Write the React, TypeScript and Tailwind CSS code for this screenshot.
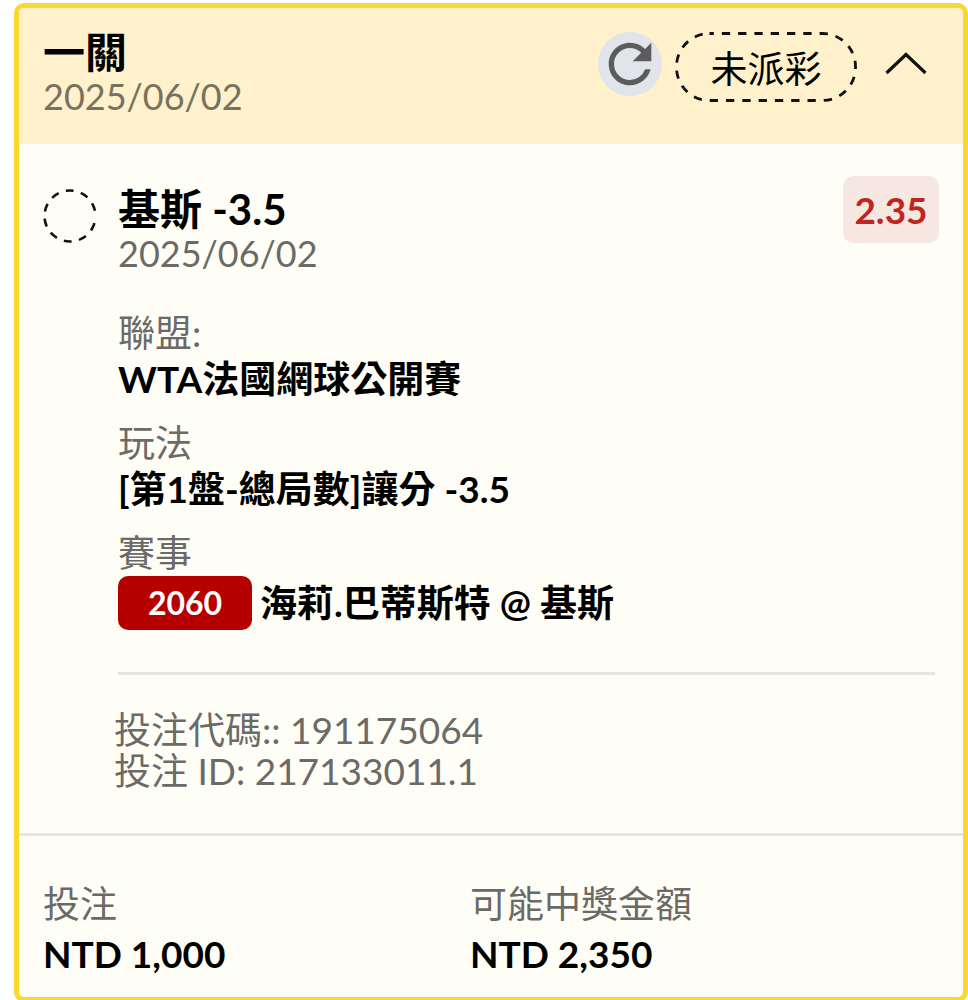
import { useState } from "react";
import { MdRefresh } from "react-icons/md";

const details = [
    { label: "聯盟:", value: "WTA法國網球公開賽" },
    { label: "玩法", value: "[第1盤-總局數]讓分 -3.5" },
];

const totals = [
    { label: "投注", value: "NTD 1,000" },
    { label: "可能中獎金額", value: "NTD 2,350" },
];

function PendingCircle() {
    return (
        <svg className="mt-3 flex-none" width="54" height="56" viewBox="0 0 54 56" fill="none" aria-hidden="true">
            <circle cx="27" cy="28" r="25.500" stroke="#111" strokeWidth="2.600" strokeDasharray="8 7.400" strokeDashoffset="-7.3" />
        </svg>
    );
}

function StatusPill({ text }: { text: string }) {
    return (
        <span className="relative flex h-[70px] w-[182px] items-center justify-center pt-1 text-[37px] text-black">
            <svg className="absolute inset-0" width="182" height="70" viewBox="0 0 182 70" fill="none" aria-hidden="true">
                <rect x="1.500" y="1.500" width="179" height="67" rx="33" stroke="#111" strokeWidth="2.800" strokeDasharray="8.300 8" strokeDashoffset="4" />
            </svg>
            {text}
        </span>
    );
}

export default function App() {
    const [open, setOpen] = useState(true);

    return (
        <main className="min-h-screen bg-white pt-[3px] pl-[14px] font-['Lato','Noto_Sans_CJK_TC',sans-serif] text-[37px] leading-[46px] text-[#6b6a66]">
            <article className="overflow-hidden rounded-[10px] border-[5px] border-[#fad82f] bg-[#fffef6]">
                <header className="flex items-start justify-between bg-[#fef1cb] px-6 pt-[22px] pb-[26px]">
                    <div className="leading-[44px]">
                        <h1 className="text-[42px] font-bold text-black">一關</h1>
                        <p className="text-[36px] text-[#78715f]">2025/06/02</p>
                    </div>
                    <div className="flex items-start pt-[2px] pr-3">
                        <button type="button" aria-label="重新整理" className="mr-[13px] rounded-full bg-[#e1e4e9] text-[#5c5c5c]">
                            <MdRefresh size={64} />
                        </button>
                        <StatusPill text="未派彩" />
                        <button
                            type="button"
                            aria-label="收合"
                            aria-expanded={open}
                            onClick={() => setOpen(!open)}
                            className="ml-7 flex h-16 items-center"
                        >
                            <svg className={open ? "" : "rotate-180"} width="42" height="24" viewBox="0 0 42 24" fill="none" aria-hidden="true">
                                <path d="M1.500 21 21 2.500 40.500 21" stroke="#111" strokeWidth="3.200" />
                            </svg>
                        </button>
                    </div>
                </header>

                {open && (
                    <section className="flex gap-[21px] border-b-[3px] border-[#e8e5df] px-6 pt-8 pb-[42px]">
                        <PendingCircle />
                        <div className="min-w-0 flex-1">
                            <div className="flex items-start justify-between">
                                <div className="pt-[11px] leading-[44px]">
                                    <h2 className="text-[42px] font-bold text-black">基斯 -3.5</h2>
                                    <p className="text-[36px]">2025/06/02</p>
                                </div>
                                <span className="flex h-[67px] w-24 items-center justify-center rounded-[10px] bg-[#f7e7e1] font-bold text-[#c0261f]">
                                    2.35
                                </span>
                            </div>

                            <dl className="mt-[35px] flex flex-col gap-[18px]">
                                {details.map((item) => (
                                    <div key={item.label}>
                                        <dt>{item.label}</dt>
                                        <dd className="font-bold text-black">{item.value}</dd>
                                    </div>
                                ))}
                                <div>
                                    <dt>賽事</dt>
                                    <dd className="flex items-center gap-2 font-bold text-black">
                                        <span className="flex h-[54px] w-[134px] items-center justify-center rounded-[10px] bg-[#b60000] text-[32px] text-white">
                                            2060
                                        </span>
                                        海莉.巴蒂斯特 @ 基斯
                                    </dd>
                                </div>
                            </dl>

                            <hr className="mt-[42px] mr-1 border-t-[3px] border-[#e8e5df]" />

                            <div className="-ml-1 mt-[34px] leading-[41px]">
                                <p>投注代碼:: 191175064</p>
                                <p>投注 ID: 217133011.1</p>
                            </div>
                        </div>
                    </section>
                )}

                <dl className="grid grid-cols-2 pt-[43px] pr-[66px] pb-[18px] pl-6">
                    {totals.map((item) => (
                        <div key={item.label} className="leading-[50px]">
                            <dt>{item.label}</dt>
                            <dd className="font-bold text-black">{item.value}</dd>
                        </div>
                    ))}
                </dl>
            </article>
        </main>
    );
}
